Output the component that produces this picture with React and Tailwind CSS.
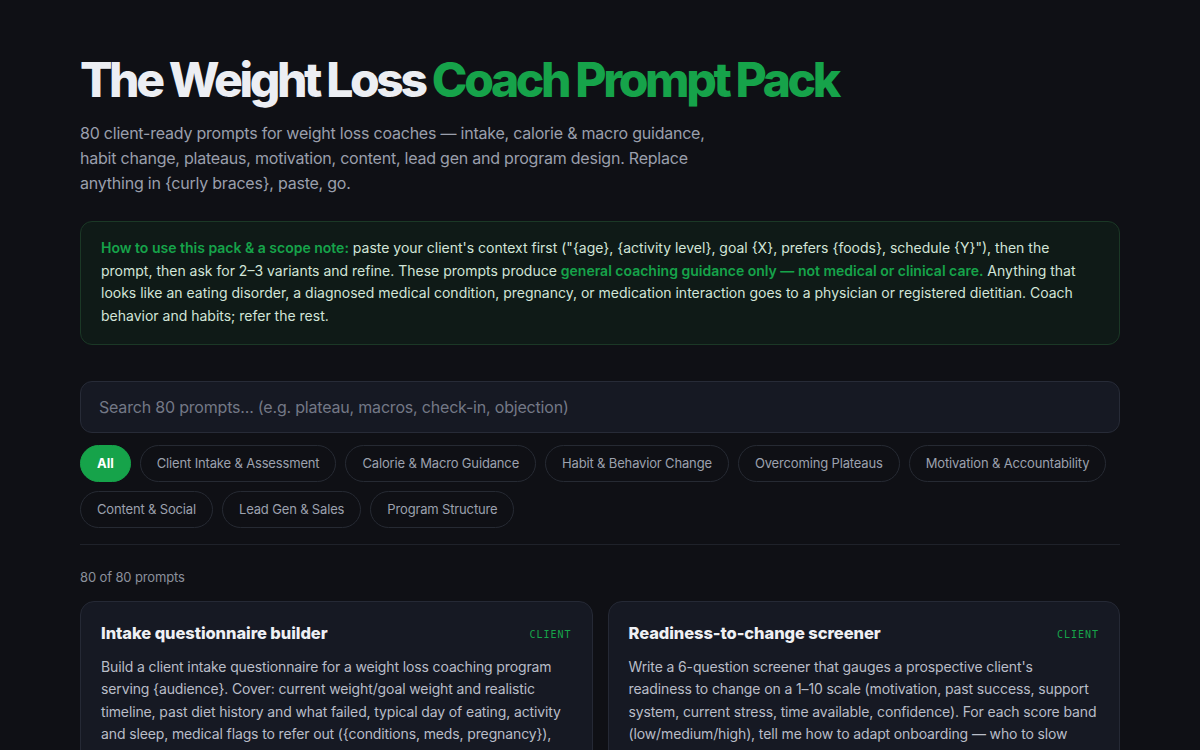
import { useState } from 'react'

const categories = [
  'All',
  'Client Intake & Assessment',
  'Calorie & Macro Guidance',
  'Habit & Behavior Change',
  'Overcoming Plateaus',
  'Motivation & Accountability',
  'Content & Social',
  'Lead Gen & Sales',
  'Program Structure',
]

const prompts = [
  {
    title: 'Intake questionnaire builder',
    tag: 'CLIENT',
    body: 'Build a client intake questionnaire for a weight loss coaching program serving {audience}. Cover: current weight/goal weight and realistic timeline, past diet history and what failed, typical day of eating, activity and sleep, medical flags to refer out ({conditions, meds, pregnancy}), stress and emotional eating triggers, and what success looks like to them.',
  },
  {
    title: 'Readiness-to-change screener',
    tag: 'CLIENT',
    body: "Write a 6-question screener that gauges a prospective client's readiness to change on a 1–10 scale (motivation, past success, support system, current stress, time available, confidence). For each score band (low/medium/high), tell me how to adapt onboarding — who to slow down, who to push, and who to refer.",
  },
]

function PromptCard({ title, tag, body }) {
  return (
    <div className="rounded-[14px] border border-[#252935] bg-[#161923] px-5 pt-[19px] pb-5">
      <div className="flex items-start justify-between gap-4">
        <h3 className="text-[16.5px] font-extrabold leading-6 tracking-[-0.005em] text-[#eef0f4]">{title}</h3>
        <span className="pt-[6px] font-['DejaVu_Sans_Mono',monospace] text-[10px] tracking-[0.1em] text-[#16a34a]">
          {tag}
        </span>
      </div>
      <p className="mt-[11px] text-[14px] leading-[22.5px] tracking-[-0.009em] text-[#b9bdc8]">{body}</p>
    </div>
  )
}

export default function App() {
  const [active, setActive] = useState('All')
  const [query, setQuery] = useState('')

  return (
    <div className="min-h-screen bg-[#0f1015] font-['Inter',sans-serif] text-[#e5e7eb]">
      <main className="mx-auto max-w-[1040px] pt-[52px] pb-16">
        <h1 className="text-[48px] font-extrabold leading-[56px] tracking-[-0.07em] text-[#eceef3]">
          The Weight Loss <span className="text-[#16a34a]">Coach Prompt Pack</span>
        </h1>
        <p className="mt-[13px] max-w-[640px] text-[16px] leading-[25px] tracking-[-0.014em] text-[#9a9fac]">
          80 client-ready prompts for weight loss coaches — intake, calorie &amp; macro guidance, habit change,
          plateaus, motivation, content, lead gen and program design. Replace anything in {'{curly braces}'},
          paste, go.
        </p>

        <div className="mt-[25px] rounded-xl border border-[#1b3826] bg-[#0f1a17] px-5 pt-[15px] pb-[17px] text-[14px] leading-[22.5px] text-[#d2e5d8]">
          <span className="font-semibold text-[#16a34a]">How to use this pack &amp; a scope note:</span> paste your
          client's context first ("{'{age}'}, {'{activity level}'}, goal {'{X}'}, prefers {'{foods}'}, schedule{' '}
          {'{Y}'}"), then the prompt, then ask for 2–3 variants and refine. These prompts produce{' '}
          <span className="font-semibold text-[#16a34a]">general coaching guidance only — not medical or clinical care.</span>{' '}
          Anything that looks like an eating disorder, a diagnosed medical condition, pregnancy, or medication
          interaction goes to a physician or registered dietitian. Coach behavior and habits; refer the rest.
        </div>

        <input
          type="text"
          value={query}
          onChange={(e) => setQuery(e.target.value)}
          placeholder="Search 80 prompts... (e.g. plateau, macros, check-in, objection)"
          className="mt-9 block h-[52px] w-full rounded-xl border border-[#272b37] bg-[#161923] px-[18px] text-[16px] tracking-[-0.012em] text-[#e5e7eb] placeholder:text-[#737886] focus:outline-none"
        />

        <div className="mt-3 flex flex-wrap gap-[9px]">
          {categories.map((c) =>
            c === active ? (
              <button
                key={c}
                onClick={() => setActive(c)}
                className="h-[37px] rounded-full border border-[#16a34a] bg-[#16a34a] px-4 text-[13px] font-bold text-white"
              >
                {c}
              </button>
            ) : (
              <button
                key={c}
                onClick={() => setActive(c)}
                className="h-[37px] rounded-full border border-[#262a33] px-4 text-[13px] tracking-[-0.012em] text-[#9ca1ae]"
              >
                {c}
              </button>
            )
          )}
        </div>

        <div className="mt-4 border-t border-[#1f222a]" />

        <p className="mt-[23px] text-[13px] tracking-[-0.01em] text-[#8b909c]">80 of 80 prompts</p>

        <div className="mt-[13px] grid grid-cols-2 gap-[15px]">
          {prompts.map((p) => (
            <PromptCard key={p.title} {...p} />
          ))}
        </div>
      </main>
    </div>
  )
}
